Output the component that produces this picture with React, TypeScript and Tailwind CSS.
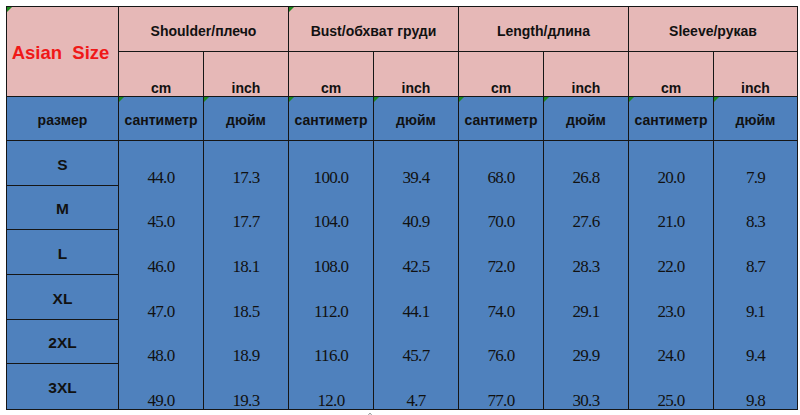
import React from "react"

const groups = ["Shoulder/плечо", "Bust/обхват груди", "Length/длина", "Sleeve/рукав"]

const sizes = ["S", "M", "L", "XL", "2XL", "3XL"]

const data = [
  ["44.0", "17.3", "100.0", "39.4", "68.0", "26.8", "20.0", "7.9"],
  ["45.0", "17.7", "104.0", "40.9", "70.0", "27.6", "21.0", "8.3"],
  ["46.0", "18.1", "108.0", "42.5", "72.0", "28.3", "22.0", "8.7"],
  ["47.0", "18.5", "112.0", "44.1", "74.0", "29.1", "23.0", "9.1"],
  ["48.0", "18.9", "116.0", "45.7", "76.0", "29.9", "24.0", "9.4"],
  ["49.0", "19.3", "12.0", "4.7", "77.0", "30.3", "25.0", "9.8"],
]

function Mark() {
  return (
    <span className="absolute left-0 top-0 h-0 w-0 border-t-[5px] border-r-[5px] border-t-[#1e8a1e] border-r-transparent" />
  )
}

export default function App() {
  const sans = { fontFamily: '"Liberation Sans", Arial, sans-serif' }
  const serif = { fontFamily: '"Liberation Serif", "Times New Roman", serif' }

  return (
    <div className="h-[415px] w-[800px] overflow-hidden bg-white">
      <div
        className="ml-[6px] mt-[6px] grid w-[792px] grid-cols-[112px_repeat(7,85px)_83px] grid-rows-[45px_45px_44px_repeat(6,44.67px)] border border-[#161616] text-[#111]"
        style={sans}
      >
        {/* pink header */}
        <div className="relative row-span-2 flex items-center justify-center border-r border-b border-[#161616] bg-[#e6b8b7] pt-[2px] pr-[4px]">
          <Mark />
          <span className="whitespace-pre text-[18.5px] font-bold text-[#f01818]">Asian  Size</span>
        </div>
        {groups.map((g, i) => (
          <div
            key={g}
            className={`relative col-span-2 flex items-center justify-center border-b border-[#161616] bg-[#e6b8b7] pt-1 text-[14px] font-bold ${i < 3 ? "border-r" : ""}`}
          >
            {i === 1 && <Mark />}
            {g}
          </div>
        ))}
        {groups.map((g, i) => (
          <React.Fragment key={g + "u"}>
            <div className="flex items-end justify-center border-r border-b border-[#161616] bg-[#e6b8b7] text-[14px] font-bold leading-[16px]">
              cm
            </div>
            <div
              className={`flex items-end justify-center border-b border-[#161616] bg-[#e6b8b7] text-[14px] font-bold leading-[16px] ${i < 3 ? "border-r" : ""}`}
            >
              inch
            </div>
          </React.Fragment>
        ))}

        {/* blue header */}
        <div className="flex items-center justify-center border-r border-b border-[#161616] bg-[#4f81bd] pt-1 text-[14px] font-bold">
          размер
        </div>
        {groups.map((g, i) => (
          <React.Fragment key={g + "r"}>
            <div className="relative flex items-center justify-center border-r border-b border-[#161616] bg-[#4f81bd] pt-1 text-[14px] font-bold">
              <Mark />
              сантиметр
            </div>
            <div
              className={`relative flex items-center justify-center border-b border-[#161616] bg-[#4f81bd] pt-1 text-[14px] font-bold ${i < 3 ? "border-r" : ""}`}
            >
              <Mark />
              дюйм
            </div>
          </React.Fragment>
        ))}

        {/* rows */}
        {sizes.map((s, r) => (
          <React.Fragment key={s}>
            <div
              className={`flex items-center justify-center border-r border-[#161616] bg-[#4f81bd] pt-[3px] text-[15.5px] font-bold ${r < 5 ? "border-b" : ""}`}
            >
              {s}
            </div>
            {data[r].map((v, c) => (
              <div
                key={c}
                className={`flex items-end justify-center overflow-hidden bg-[#4f81bd] text-[17px] leading-[16px] tracking-[-0.7px] ${c < 7 ? "border-r border-[#161616]" : ""}`}
                style={serif}
              >
                {v}
              </div>
            ))}
          </React.Fragment>
        ))}
      </div>
      <div className="pl-[367px] pt-[2px]">
        <svg width="6" height="4" viewBox="0 0 6 4">
          <path d="M1 3.5 L3 1 L5 3.5" stroke="#999" strokeWidth="1" fill="none" />
        </svg>
      </div>
    </div>
  )
}
